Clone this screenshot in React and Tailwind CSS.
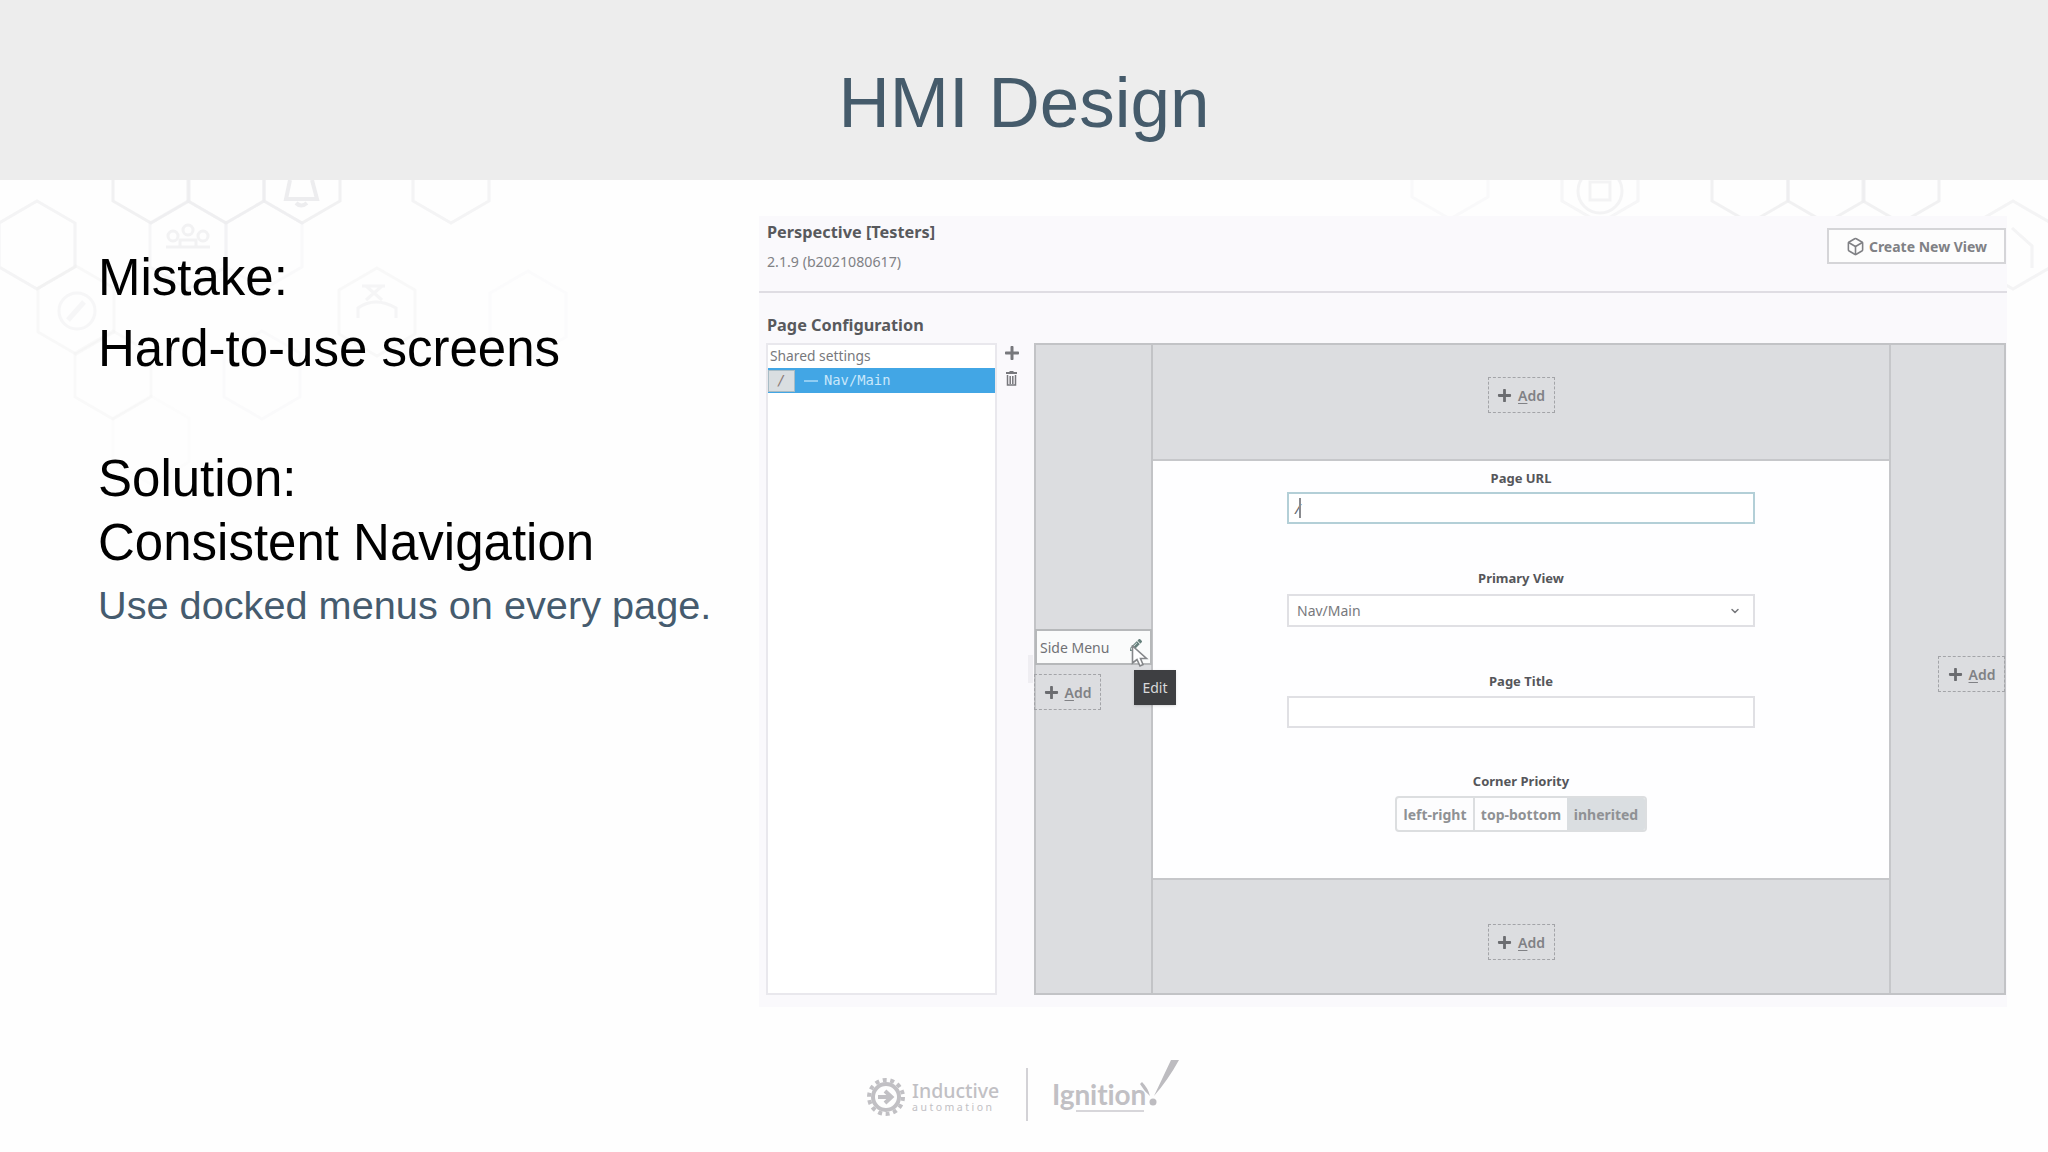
import React from "react";
import { FaPlus, FaPencilAlt } from "react-icons/fa";
import { Box, ChevronDown } from "lucide-react";

const HEXAGONS = [
  { x: 151, y: 179, o: 0.8 },
  { x: 226, y: 179, o: 0.8 },
  { x: 302, y: 179, o: 0.8 },
  { x: 188, y: 245, o: 0.45 },
  { x: 264, y: 245, o: 0.25 },
  { x: 37, y: 245, o: 0.6 },
  { x: 76, y: 310, o: 0.35 },
  { x: 113, y: 375, o: 0.3 },
  { x: 262, y: 375, o: 0.2 },
  { x: 151, y: 440, o: 0.1 },
  { x: 451, y: 179, o: 0.6 },
  { x: 377, y: 312, o: 0.35 },
  { x: 528, y: 315, o: 0.15 },
  { x: 1450, y: 175, o: 0.25 },
  { x: 1600, y: 179, o: 0.5 },
  { x: 1750, y: 179, o: 0.8 },
  { x: 1826, y: 179, o: 0.8 },
  { x: 1901, y: 179, o: 0.8 },
  { x: 2013, y: 245, o: 0.6 },
];

const HexBackground = () => (
  <svg
    className="absolute left-0 top-[180px] h-[972px] w-[2048px]"
    viewBox="0 180 2048 972"
    fill="none"
    stroke="#ededef"
    strokeWidth="3"
  >
    {HEXAGONS.map((h) => (
      <path
        key={`${h.x}-${h.y}`}
        d="M0 -44 L38 -22 V22 L0 44 L-38 22 V-22 Z"
        transform={`translate(${h.x} ${h.y})`}
        opacity={h.o}
      />
    ))}
    {/* bell */}
    <path d="M290 180 L286 199 H317 L312 180 M296 203 Q301 208 307 203" strokeWidth="4" />
    {/* people */}
    <g opacity="0.7">
      <circle cx="188" cy="230" r="5" />
      <circle cx="173" cy="236" r="5" />
      <circle cx="203" cy="236" r="5" />
      <path d="M180 247 V240 H196 V247 M166 247 H210" />
    </g>
    {/* pen */}
    <g opacity="0.45">
      <circle cx="77" cy="311" r="18" />
      <path d="M68 320 L84 302" strokeWidth="5" />
    </g>
    {/* worker */}
    <g opacity="0.5">
      <path d="M362 286 H385 M366 300 L382 286 M366 286 L382 300" />
      <path d="M358 318 V308 Q375 296 396 308 V318" />
    </g>
    {/* chip */}
    <g opacity="0.6">
      <circle cx="1600" cy="191" r="22" />
      <rect x="1590" y="182" width="20" height="18" />
    </g>
    <path d="M2012 228 L2032 246 V268" opacity="0.6" />
  </svg>
);

const AddButton = ({ className = "" }) => (
  <button
    className={`flex h-9 w-[67px] shrink-0 items-center justify-center gap-[6px] border border-dashed border-[#a3a4a8] text-[14px] font-semibold text-[#808185] ${className}`}
  >
    <FaPlus className="h-[15px] w-[15px] text-[#6b6c70]" />
    <span>
      <span className="underline underline-offset-2">A</span>dd
    </span>
  </button>
);

const FieldLabel = ({ children }) => (
  <div className="h-5 text-center text-[13px] font-bold leading-5 text-[#55565a]">{children}</div>
);

const PageForm = () => (
  <div className="flex flex-col items-center border-y-2 border-[#c6c7ca] bg-[#fefeff] pt-[7px]">
    <FieldLabel>Page URL</FieldLabel>
    <div className="mt-[4px] flex h-8 w-[468px] items-center border-2 border-[#b3cfd7] bg-white px-1.5 text-[15px] italic text-[#66676b]">
      /<span className="-ml-px h-5 w-0.5 bg-[#8a8b8f]" />
    </div>
    <div className="mt-[44px]">
      <FieldLabel>Primary View</FieldLabel>
    </div>
    <div className="mt-[6px] flex h-[33px] w-[468px] items-center justify-between border-2 border-[#e0e0e4] bg-white pl-2 pr-3 text-[14px] text-[#77787c]">
      Nav/Main
      <ChevronDown className="h-3 w-3" strokeWidth={3} />
    </div>
    <div className="mt-[44px]">
      <FieldLabel>Page Title</FieldLabel>
    </div>
    <div className="mt-[5px] h-8 w-[468px] border-2 border-[#e0e0e4] bg-white" />
    <div className="mt-[43px]">
      <FieldLabel>Corner Priority</FieldLabel>
    </div>
    <div className="mt-[5px] flex h-9 w-[252px] overflow-hidden rounded border-2 border-[#dcdee0] bg-[#fdfdfe] text-[14px] font-bold text-[#8f9194]">
      <div className="flex w-[76px] items-center justify-center">left-right</div>
      <div className="flex w-[94px] items-center justify-center border-l-2 border-[#dcdee0]">top-bottom</div>
      <div className="flex flex-1 items-center justify-center bg-[#dadee1]">inherited</div>
    </div>
  </div>
);

const SideDock = () => (
  <div className="flex flex-col border-r-2 border-[#c2c3c6] pt-[284px]">
    <div className="relative -ml-px flex h-9 w-[117px] items-center justify-between border-2 border-[#b6b8ba] bg-[#fafbfb] pl-[3px] pr-2 text-[14px] text-[#707175]">
      Side Menu
      <FaPencilAlt className="mb-1 h-3 w-3 text-[#66807c]" />
      {/* Drag handle */}
      <span className="absolute -left-[9px] top-6 h-7 w-[5px] bg-[#efeef2]" />
      <svg className="absolute left-[94px] top-[14px] h-6 w-[18px]" viewBox="0 0 18 24">
        <path d="M1.5 1 V18 L6 14.5 L9 21 L12 19.5 L9.5 13.5 H15.5 Z" fill="#fff" stroke="#85878a" strokeWidth="1.6" />
      </svg>
      <div className="absolute left-[97px] top-[39px] flex h-[35px] w-[42px] items-center justify-center bg-[#3e3f42] text-[14px] text-[#d8d8da] shadow">
        Edit
      </div>
    </div>
    <AddButton className="-ml-[2px] mt-[9px]" />
  </div>
);

const LayoutCanvas = () => (
  <div className="ml-[14px] grid h-[652px] w-[972px] grid-cols-[117px_738px_1fr] border-2 border-[#c2c3c6] bg-[#dcdde0]">
    <SideDock />
    <div className="grid grid-rows-[114px_421px_1fr] border-r-2 border-[#c6c7ca]">
      <div className="flex items-start justify-center pt-8">
        <AddButton />
      </div>
      <PageForm />
      <div className="flex items-start justify-center pt-[44px]">
        <AddButton />
      </div>
    </div>
    <div className="flex justify-end pt-[311px]">
      <AddButton className="-mr-px" />
    </div>
  </div>
);

const PageList = () => (
  <div className="w-[231px] border-2 border-[#e9e8ed] bg-white">
    <div className="h-[23px] pl-0.5 text-[13.8px] leading-[21px] text-[#77787c]">Shared settings</div>
    <div className="flex h-[25px] items-center bg-[#42a6e5] font-['DejaVu_Sans_Mono',monospace] text-[13.8px] text-[#c9e8fb]">
      <span className="flex h-[22px] w-[27px] items-center justify-center border border-[#a8bcc6] bg-[#d9dee1] italic text-[#8b7a77]">/</span>
      <span className="ml-[9px] h-[2px] w-[14px] bg-[#8fcdf3]" />
      <span className="ml-[6px]">Nav/Main</span>
    </div>
  </div>
);

const DesignerPanel = () => (
  <section className="relative ml-[759px] mt-[36px] h-[791px] w-[1248px] bg-[#faf9fc] font-['Noto_Sans',sans-serif]">
    <header className="flex h-[77px] items-start justify-between border-b-2 border-[#dfdde3] pl-[8px]">
      <div>
        <h2 className="mt-1 text-[16.3px] font-bold leading-6 text-[#58595d]">Perspective [Testers]</h2>
        <p className="mt-[6px] text-[14.2px] leading-6 text-[#808185]">2.1.9 (b2021080617)</p>
      </div>
      <button className="mr-px mt-3 flex h-[36px] w-[179px] items-center justify-center gap-1 border-2 border-[#d5d5d8] bg-[#fdfdfd] text-[14px] font-bold text-[#808185]">
        <Box className="h-[19px] w-[19px]" strokeWidth={2} />
        Create New View
      </button>
    </header>
    <h3 className="mt-5 pl-[8px] text-[16.3px] font-bold leading-6 text-[#58595d]">Page Configuration</h3>
    <div className="mt-[6px] flex h-[652px] pl-[7px]">
      <PageList />
      <div className="flex w-[23px] flex-col items-end gap-[10px] pt-[2px] text-[#77787c]">
        <FaPlus className="h-4 w-4" />
        <svg className="mr-[3px] h-[15px] w-[11px]" viewBox="0 0 11 15" fill="none" stroke="currentColor">
          <path d="M0 2 H11 M3.5 1 H7.5" strokeWidth="2" />
          <path d="M1.5 4 V14 H9.5 V4 M4.2 5 V13 M6.8 5 V13" strokeWidth="1.5" />
        </svg>
      </div>
      <LayoutCanvas />
    </div>
  </section>
);

const GearLogo = () => (
  <svg className="h-[40px] w-[40px]" viewBox="-20 -20 40 40" fill="none" stroke="#c1c0c4">
    <circle r="13" strokeWidth="4" />
    <circle r="17" strokeWidth="4" strokeDasharray="4 3.63" />
    <path d="M-8 0 H5 M-1 -6 L5.5 0 L-1 6" strokeWidth="4" />
  </svg>
);

const FooterLogos = () => (
  <footer className="relative ml-[866px] mt-[43px] flex h-[90px] text-[#c1c0c4]">
    <div className="flex h-[94px] items-center gap-[6px]">
      <GearLogo />
      <div className="w-[87px] font-['Noto_Sans',sans-serif]">
        <div className="whitespace-nowrap text-[19.5px] font-medium leading-[20px]">Inductive</div>
        <div className="whitespace-nowrap text-[10.5px] leading-[12px] tracking-[2.5px]">automation</div>
      </div>
    </div>
    <div className="ml-[27px] mt-[18px] h-[53px] w-[2px] bg-[#d3d2d6]" />
    <div className="relative ml-[24px] mt-[24px] font-['Lato',sans-serif] text-[28px] font-bold leading-[40px] tracking-[-0.1px]">
      Ignition
      <svg className="absolute -top-[16px] left-0 h-[60px] w-[132px]" viewBox="0 0 132 60">
        <path d="M127 2 L119 2 Q111 19 102 38 Q116 22 127 2 Z" fill="#bdbcc0" />
        <path d="M90 24 Q96 30 98 38 Q92 33 88 26 Z" fill="#bdbcc0" />
        <circle cx="101" cy="44" r="3.5" fill="#bdbcc0" />
        <path d="M24 53 H92" stroke="#d7d6da" strokeWidth="2" />
      </svg>
    </div>
  </footer>
);

export default function App() {
  return (
    <main className="relative h-[1152px] w-[2048px] overflow-hidden bg-[#fefefe] font-['Liberation_Sans',Arial,sans-serif]">
      <HexBackground />
      <header className="flex h-[180px] items-center justify-center bg-[#ededed] pt-6">
        <h1 className="text-[71px] leading-none text-[#455b6b]">HMI Design</h1>
      </header>

      <div className="grid grid-cols-1 grid-rows-1">
        <section className="relative col-start-1 row-start-1 w-[660px] whitespace-nowrap pl-[98px] pt-[63px] text-[51px] text-black">
          <p className="leading-[70px]">Mistake:</p>
          <p className="leading-[71px]">Hard-to-use screens</p>
          <p className="mt-[62px] leading-[65px]">Solution:</p>
          <p className="leading-[64px]">Consistent Navigation</p>
          <p className="text-[39.7px] leading-[61px] text-[#455b6e]">Use docked menus on every page.</p>
        </section>
        <div className="col-start-1 row-start-1">
          <DesignerPanel />
          <FooterLogos />
        </div>
      </div>
    </main>
  );
}
